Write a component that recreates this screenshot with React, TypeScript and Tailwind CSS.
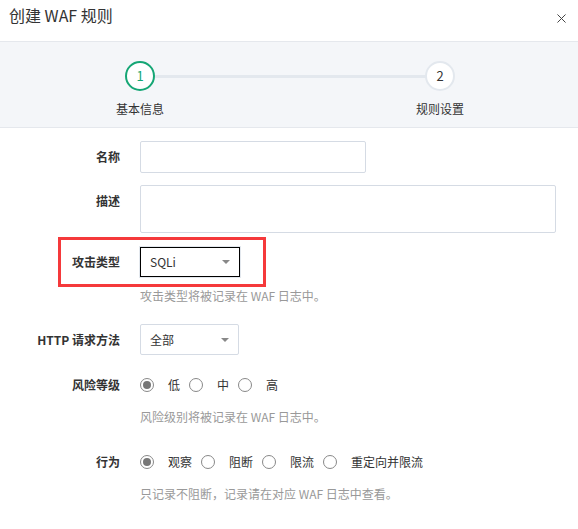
import { X } from "lucide-react";

const font = { fontFamily: '"Noto Sans CJK SC", "Noto Sans", sans-serif' };

function Caret() {
  return (
    <span className="ml-auto h-0 w-0 border-x-[4px] border-t-[4px] border-x-transparent border-t-[#888]" />
  );
}

function Radio({ checked, label }: { checked?: boolean; label: string }) {
  return (
    <label className="flex items-center">
      <span className="flex h-[14px] w-[14px] items-center justify-center rounded-full border border-[#888] bg-white">
        {checked && <span className="h-[8px] w-[8px] rounded-full bg-[#777]" />}
      </span>
      <span className="ml-[14px] mr-[9px] text-[12px] text-[#333]">{label}</span>
    </label>
  );
}

function Row({
  label,
  children,
  className = "",
  labelClass = "",
}: {
  label: string;
  children: React.ReactNode;
  className?: string;
  labelClass?: string;
}) {
  return (
    <div className={`flex ${className}`}>
      <div className={`w-[120px] shrink-0 text-right text-[12px] font-bold text-[#333] ${labelClass}`}>
        {label}
      </div>
      <div className="ml-[20px]">{children}</div>
    </div>
  );
}

export default function App() {
  return (
    <div className="h-[529px] w-[578px] overflow-hidden bg-white" style={font}>
      {/* Header */}
      <div className="flex h-[42px] items-start justify-between border-b border-[#e5e8ed] px-[9px] pt-[3px]">
        <h2 className="text-[16px] leading-[24px] text-[#333]">创建 WAF 规则</h2>
        <X size={15} strokeWidth={1.6} className="mr-0 mt-[8px] text-[#444]" />
      </div>

      {/* Steps */}
      <div className="relative h-[86px] border-b border-[#e5e8ed] bg-[#f4f6f9]">
        <div className="absolute left-[155px] top-[33px] h-[3px] w-[271px] bg-[#e3e8ee]" />
        <div className="absolute left-[90px] top-[19px] flex w-[100px] flex-col items-center">
          <div className="flex h-[30px] w-[30px] items-center justify-center rounded-full border-2 border-[#15a675] bg-white text-[13px] text-[#15a675]">
            1
          </div>
          <div className="mt-[9px] text-[12px] text-[#333]">基本信息</div>
        </div>
        <div className="absolute left-[390px] top-[19px] flex w-[100px] flex-col items-center">
          <div className="flex h-[30px] w-[30px] items-center justify-center rounded-full border-2 border-[#e3e8ee] bg-white text-[13px] text-[#333]">
            2
          </div>
          <div className="mt-[9px] text-[12px] text-[#333]">规则设置</div>
        </div>
      </div>

      {/* Form */}
      <div className="pt-[13px]">
        <Row label="名称" className="items-center">
          <div className="h-[32px] w-[226px] rounded-[2px] border border-[#d5dbe4]" />
        </Row>

        <Row label="描述" className="mt-[12px] items-start" labelClass="mt-[7px]">
          <div className="h-[48px] w-[416px] rounded-[2px] border border-[#d5dbe4]" />
        </Row>

        <div className="ml-[58px] mt-[4px] flex h-[50px] w-[208px] items-center border-[3px] border-[#f5393b]">
          <div className="w-[59px] text-right text-[12px] font-bold text-[#333]">攻击类型</div>
          <div className="ml-[20px] flex h-[30px] w-[100px] items-center border border-black px-[9px] text-[12px] text-[#333] shadow-[0_0_0_1px_#e3e8ee]">
            SQLi
            <Caret />
          </div>
        </div>
        <div className="ml-[140px] text-[12px] text-[#999]">攻击类型将被记录在 WAF 日志中。</div>

        <Row label="HTTP 请求方法" className="mt-[19px] items-center">
          <div className="flex h-[31px] w-[99px] items-center rounded-[2px] border border-[#d5dbe4] px-[9px] text-[12px] text-[#333]">
            全部
            <Caret />
          </div>
        </Row>

        <Row label="风险等级" className="mt-[21px] items-center">
          <div className="flex items-center">
            <Radio checked label="低" />
            <Radio label="中" />
            <Radio label="高" />
          </div>
        </Row>
        <div className="ml-[140px] mt-[14px] text-[12px] text-[#999]">风险级别将被记录在 WAF 日志中。</div>

        <Row label="行为" className="mt-[27px] items-center">
          <div className="flex items-center">
            <Radio checked label="观察" />
            <Radio label="阻断" />
            <Radio label="限流" />
            <Radio label="重定向并限流" />
          </div>
        </Row>
        <div className="ml-[140px] mt-[14px] text-[12px] text-[#999]">只记录不阻断，记录请在对应 WAF 日志中查看。</div>
      </div>
    </div>
  );
}
